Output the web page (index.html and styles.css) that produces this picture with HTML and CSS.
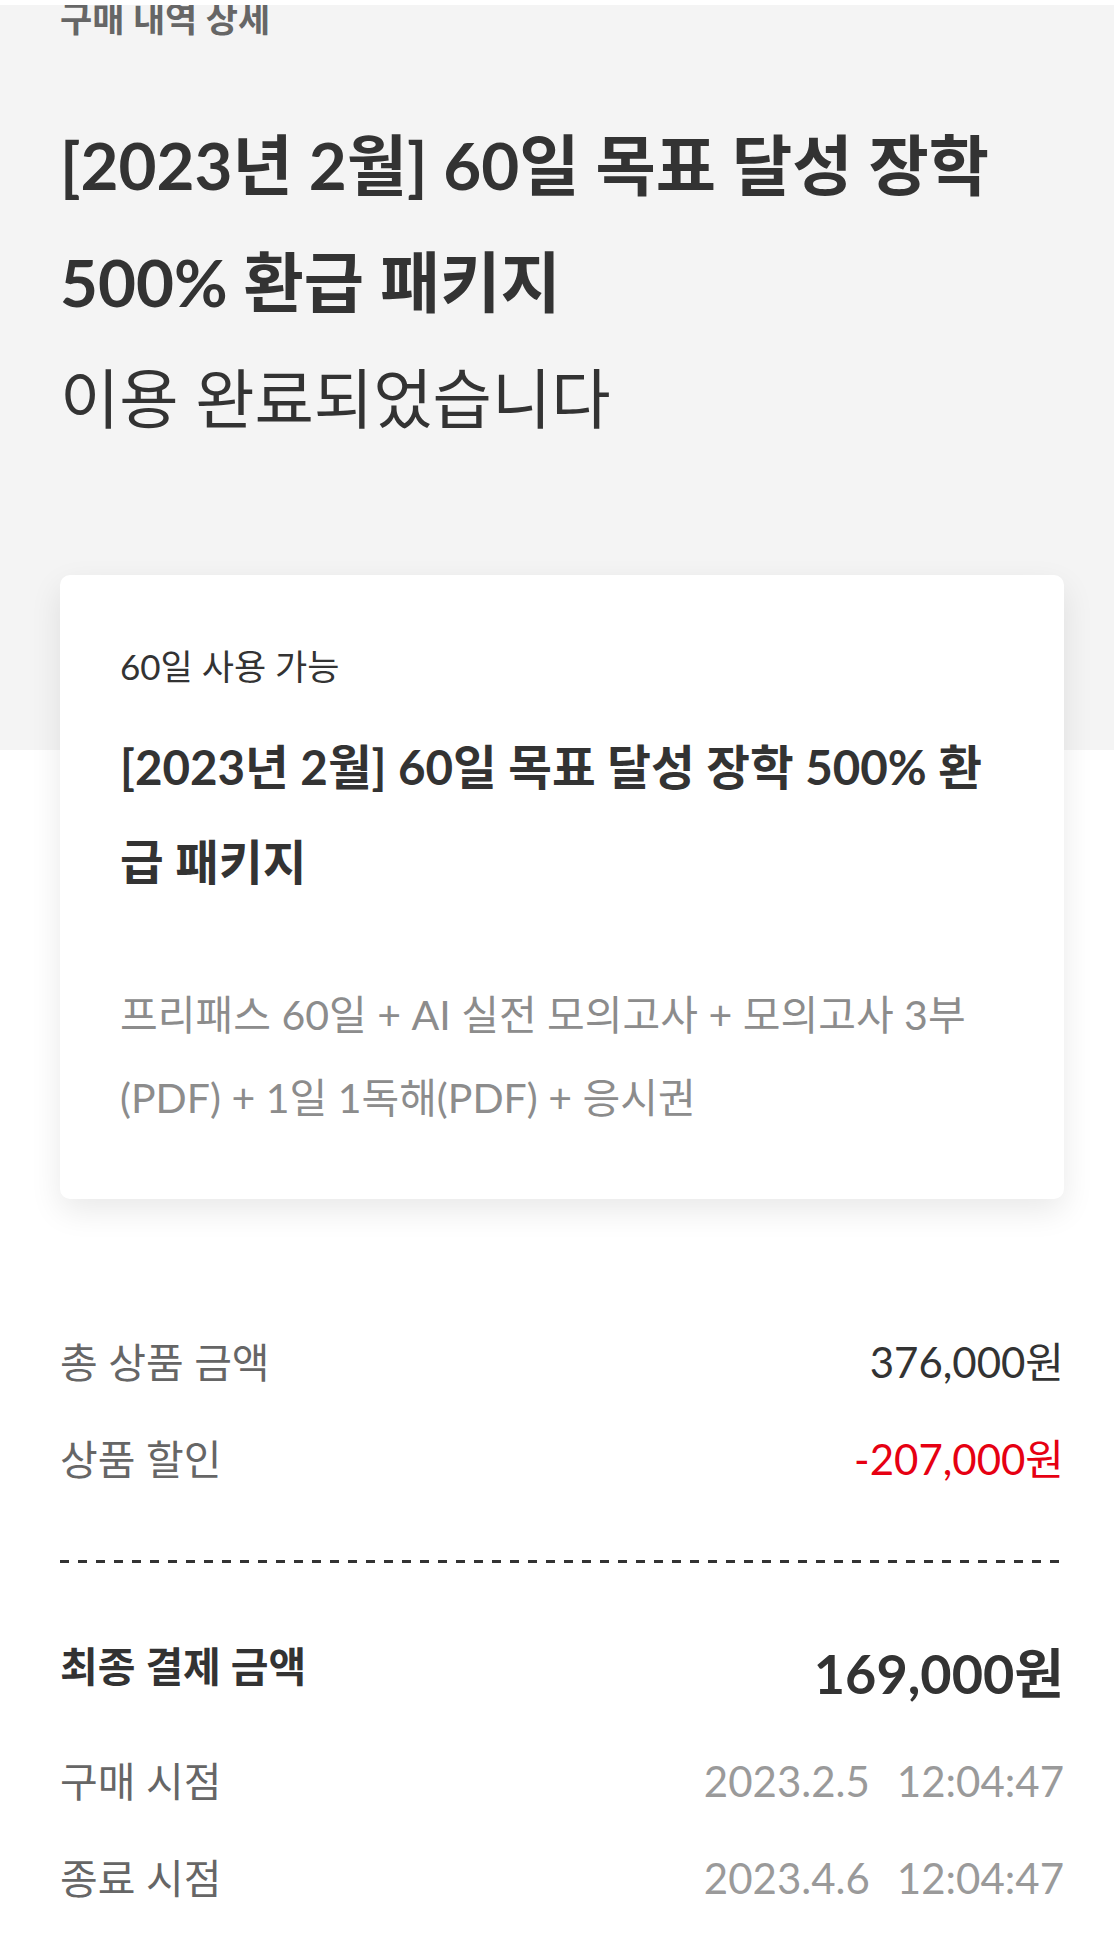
FILE: index.html
```html
<!DOCTYPE html>
<html lang="ko">
<head>
    <meta charset="UTF-8">
    <meta name="viewport" content="width=device-width, initial-scale=1.0">
    <title>구매 내역 상세</title>
    <link rel="stylesheet" href="styles.css">
</head>
<body>
    <div class="top">
        <h2 class="page_title">구매 내역 상세</h2>
        <h1 class="product_name">[2023년 2월] 60일 목표 달성 장학 500% 환급 패키지</h1>
        <p class="status">이용 완료되었습니다</p>
    </div>

    <div class="card">
        <div class="period">60일 사용 가능</div>
        <div class="card_title">[2023년 2월] 60일 목표 달성 장학 500% 환급 패키지</div>
        <div class="card_desc">프리패스 60일 + AI 실전 모의고사 + 모의고사 3부 (PDF) + 1일 1독해(PDF) + 응시권</div>
    </div>

    <div class="price">
        <div class="row">
            <span class="label">총 상품 금액</span>
            <span class="value">376,000원</span>
        </div>
        <div class="row">
            <span class="label">상품 할인</span>
            <span class="value sale">-207,000원</span>
        </div>
        <div class="divider"></div>
        <div class="row total">
            <span class="label">최종 결제 금액</span>
            <span class="value">169,000원</span>
        </div>
        <div class="row">
            <span class="label">구매 시점</span>
            <span class="value date">2023.2.5<span class="time">12:04:47</span></span>
        </div>
        <div class="row">
            <span class="label">종료 시점</span>
            <span class="value date">2023.4.6<span class="time">12:04:47</span></span>
        </div>
    </div>
</body>
</html>
```

FILE: styles.css
```css
*{
    box-sizing: border-box;
}
body{
    margin: 0;
    padding: 5px 0 0;
    background-color: #ffffff;
    font-family: Lato, "Noto Sans CJK KR", sans-serif;
    color: #333333;
}
.top{
    background-color: #f4f4f4;
    padding: 0 50px 293px 60px;
    overflow: hidden;
}
.top .page_title{
    margin: -7px 0 0;
    font-size: 35px;
    line-height: 40px;
    font-weight: 700;
    color: #666666;
}
.top .product_name{
    margin: 68px 0 0;
    font-size: 65.5px;
    line-height: 117px;
    font-weight: 700;
    color: #333333;
}
.top .status{
    margin: 0;
    font-size: 64.5px;
    line-height: 117px;
    font-weight: 400;
    color: #333333;
}
.card{
    margin: -175px 50px 0 60px;
    padding: 66px 60px 60px;
    background-color: #ffffff;
    border-radius: 10px;
    box-shadow: 0px 12px 32px rgba(0, 0, 0, 0.09);
}
.card .period{
    font-size: 35px;
    line-height: 50px;
}
.card .card_title{
    margin-top: 28px;
    font-size: 47.5px;
    line-height: 95px;
    font-weight: 700;
}
.card .card_desc{
    margin-top: 64px;
    font-size: 41px;
    line-height: 83px;
    color: #8c8c8c;
}
.price{
    margin: 115px 50px 0 60px;
    padding-bottom: 10px;
}
.price .row{
    display: flex;
    justify-content: space-between;
    align-items: center;
    line-height: 97px;
}
.price .label{
    font-size: 41px;
    color: #666666;
}
.price .value{
    font-size: 42px;
    color: #333333;
}
.price .value.sale{
    color: #e60012;
}
.price .divider{
    margin-top: 52px;
    height: 3px;
    background: repeating-linear-gradient(to right, #333333 0px, #333333 9px, transparent 9px, transparent 18px);
}
.price .total{
    margin: 55px 0 11px;
    align-items: flex-start;
}
.price .total .label{
    font-weight: 700;
    color: #333333;
}
.price .total .value{
    font-size: 54px;
    font-weight: 700;
    margin-top: 7px;
}
.price .value.date{
    color: #9a9a9a;
}
.price .date .time{
    margin-left: 27px;
}
```
